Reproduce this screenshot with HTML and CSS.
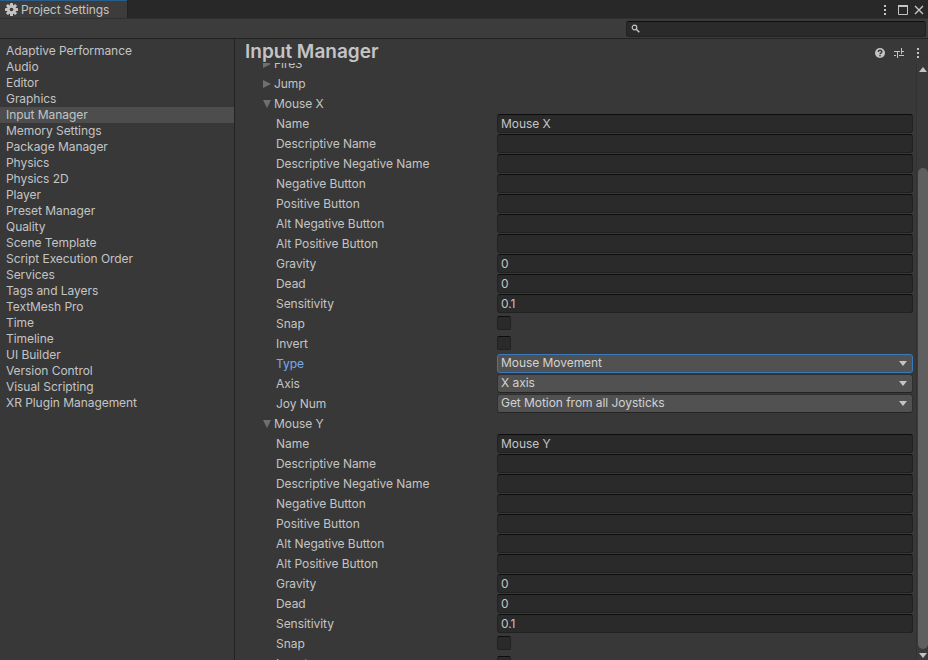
FILE: index.html
```html
<!DOCTYPE html>
<html lang="en">
<head>
<meta charset="utf-8">
<title>Project Settings</title>
<link rel="stylesheet" href="styles.css">
</head>
<body>
<div class="window">
  <div class="tabbar">
    <div class="tab">
      <svg class="gear" width="13" height="13" viewBox="0 0 13 13"><g fill="#c4c4c4"><rect x="5" y="0" width="3" height="13" rx=".5"/><rect x="5" y="0" width="3" height="13" rx=".5" transform="rotate(45 6.500 6.500)"/><rect x="5" y="0" width="3" height="13" rx=".5" transform="rotate(90 6.500 6.500)"/><rect x="5" y="0" width="3" height="13" rx=".5" transform="rotate(135 6.500 6.500)"/></g><circle cx="6.500" cy="6.500" r="3.500" fill="none" stroke="#c4c4c4" stroke-width="2.200"/><circle cx="6.500" cy="6.500" r="1.800" fill="#3c3c3c"/></svg>
      <span>Project Settings</span>
    </div>
    <div class="winctl">
      <svg class="dots" width="4" height="10" viewBox="0 0 4 10"><g fill="#c4c4c4"><rect x="1" y="0" width="2" height="2"/><rect x="1" y="4" width="2" height="2"/><rect x="1" y="8" width="2" height="2"/></g></svg>
      <svg class="maxi" width="10" height="10" viewBox="0 0 10 10"><path fill="none" stroke="#c4c4c4" d="M.5 1.500h9v8h-9z"/><path stroke="#c4c4c4" stroke-width="2" d="M0 1h10"/></svg>
      <svg width="10" height="10" viewBox="0 0 10 10"><path stroke="#c4c4c4" stroke-width="1.400" d="M1 1l8 8M9 1l-8 8"/></svg>
    </div>
  </div>
  <div class="toolbar">
    <div class="search">
      <svg width="9" height="9" viewBox="0 0 9 9"><circle cx="3.500" cy="3.500" r="2.300" fill="none" stroke="#c4c4c4" stroke-width="1.200"/><path stroke="#c4c4c4" stroke-width="1.500" d="M5.300 5.300l3 3"/></svg>
    </div>
  </div>
  <div class="main">
    <nav class="side">
      <div class="item">Adaptive Performance</div>
      <div class="item">Audio</div>
      <div class="item">Editor</div>
      <div class="item">Graphics</div>
      <div class="item selected">Input Manager</div>
      <div class="item">Memory Settings</div>
      <div class="item">Package Manager</div>
      <div class="item">Physics</div>
      <div class="item">Physics 2D</div>
      <div class="item">Player</div>
      <div class="item">Preset Manager</div>
      <div class="item">Quality</div>
      <div class="item">Scene Template</div>
      <div class="item">Script Execution Order</div>
      <div class="item">Services</div>
      <div class="item">Tags and Layers</div>
      <div class="item">TextMesh Pro</div>
      <div class="item">Time</div>
      <div class="item">Timeline</div>
      <div class="item">UI Builder</div>
      <div class="item">Version Control</div>
      <div class="item">Visual Scripting</div>
      <div class="item">XR Plugin Management</div>
    </nav>
    <section class="content">
      <header class="head">
        <h1>Input Manager</h1>
        <div class="headicons">
          <svg width="10" height="10" viewBox="0 0 10 10"><circle cx="5" cy="5" r="5" fill="#c4c4c4"/><path fill="none" stroke="#383838" stroke-width="1.400" d="M3.300 3.900c0-2.200 3.500-2.200 3.500-.1 0 1.300-1.800 1.200-1.800 2.500"/><rect x="4.300" y="7" width="1.400" height="1.400" fill="#383838"/></svg>
          <svg width="10" height="10" viewBox="0 0 10 10"><g stroke="#c4c4c4" fill="none"><path d="M0 3.500h6M8 3.500h2M7.500 0v6M0 7.500h2M5 7.500h5M3.500 4v6"/></g></svg>
          <svg width="4" height="10" viewBox="0 0 4 10"><g fill="#c4c4c4"><rect x="1" y="0" width="2" height="2"/><rect x="1" y="4" width="2" height="2"/><rect x="1" y="8" width="2" height="2"/></g></svg>
        </div>
      </header>
      <div class="body">
        <div class="scroll">
          <div class="rows">
            <div class="row group"><i class="tri right"></i>Fire3</div>
            <div class="row group"><i class="tri right"></i>Jump</div>
            <div class="row group"><i class="tri down"></i>Mouse X</div>
            <div class="row"><label>Name</label><div class="field">Mouse X</div></div>
            <div class="row"><label>Descriptive Name</label><div class="field"></div></div>
            <div class="row"><label>Descriptive Negative Name</label><div class="field"></div></div>
            <div class="row"><label>Negative Button</label><div class="field"></div></div>
            <div class="row"><label>Positive Button</label><div class="field"></div></div>
            <div class="row"><label>Alt Negative Button</label><div class="field"></div></div>
            <div class="row"><label>Alt Positive Button</label><div class="field"></div></div>
            <div class="row"><label>Gravity</label><div class="field">0</div></div>
            <div class="row"><label>Dead</label><div class="field">0</div></div>
            <div class="row"><label>Sensitivity</label><div class="field">0.1</div></div>
            <div class="row"><label>Snap</label><div class="check"></div></div>
            <div class="row"><label>Invert</label><div class="check"></div></div>
            <div class="row"><label class="focus">Type</label><div class="select focused">Mouse Movement<i class="caret"></i></div></div>
            <div class="row"><label>Axis</label><div class="select">X axis<i class="caret"></i></div></div>
            <div class="row"><label>Joy Num</label><div class="select">Get Motion from all Joysticks<i class="caret"></i></div></div>
            <div class="row group"><i class="tri down"></i>Mouse Y</div>
            <div class="row"><label>Name</label><div class="field">Mouse Y</div></div>
            <div class="row"><label>Descriptive Name</label><div class="field"></div></div>
            <div class="row"><label>Descriptive Negative Name</label><div class="field"></div></div>
            <div class="row"><label>Negative Button</label><div class="field"></div></div>
            <div class="row"><label>Positive Button</label><div class="field"></div></div>
            <div class="row"><label>Alt Negative Button</label><div class="field"></div></div>
            <div class="row"><label>Alt Positive Button</label><div class="field"></div></div>
            <div class="row"><label>Gravity</label><div class="field">0</div></div>
            <div class="row"><label>Dead</label><div class="field">0</div></div>
            <div class="row"><label>Sensitivity</label><div class="field">0.1</div></div>
            <div class="row"><label>Snap</label><div class="check"></div></div>
            <div class="row"><label>Invert</label><div class="check"></div></div>
          </div>
        </div>
        <div class="scrollbar">
          <i class="arrow up"></i>
          <div class="thumb"></div>
          <i class="arrow dn"></i>
        </div>
      </div>
    </section>
  </div>
</div>
</body>
</html>
```
FILE: styles.css
```css
* { box-sizing: border-box; }
html, body { margin: 0; padding: 0; height: 100%; overflow: hidden; }
body { background: #383838; color: #c4c4c4; font: 12px/16px Inter, "Liberation Sans", sans-serif; letter-spacing: -.05px; }
.window { width: 928px; height: 660px; display: flex; flex-direction: column; overflow: hidden; }
.tabbar { height: 18px; flex: none; background: #282828; display: flex; justify-content: space-between; }
.tab { width: 127px; height: 18px; background: #3c3c3c; border-top: 1px solid #2c5d87; display: flex; align-items: center; padding-left: 5px; gap: 3px; box-shadow: 1px 0 0 #232323; }
.gear { flex: none; }
.winctl { display: flex; align-items: center; gap: 6px; padding: 1px 4px 0 0; }
.dots { margin-right: 5px; }
.toolbar { height: 21px; flex: none; background: #3c3c3c; border-top: 1px solid #303030; border-bottom: 1px solid #232323; display: flex; justify-content: flex-end; align-items: center; padding-right: 2px; }
.search { width: 300px; height: 16px; background: #2a2a2a; border: 1px solid #212121; border-top-color: #0d0d0d; border-radius: 3px; display: flex; align-items: center; padding-left: 4px; }
.main { flex: 1; min-height: 0; display: flex; }
.side { width: 235px; flex: none; border-right: 1px solid #232323; padding-top: 4px; }
.item { height: 16px; padding-left: 6px; line-height: 16px; white-space: nowrap; }
.item.selected { background: #4d4d4d; }
.content { flex: 1; min-width: 0; display: flex; flex-direction: column; }
.head { height: 24px; flex: none; display: flex; justify-content: space-between; align-items: flex-start; padding: 2px 8px 0 10px; }
.head h1 { margin: 0; font-size: 19px; line-height: 22px; font-weight: 600; color: #c4c4c4; letter-spacing: 0; }
.headicons { display: flex; align-items: center; gap: 9px; padding-top: 7px; }
.headicons svg:nth-child(2) { margin-right: 3px; }
.body { flex: 1; min-height: 0; display: flex; }
.scroll { flex: 1; min-width: 0; overflow: hidden; }
.rows { margin-top: -9px; padding: 0 3px 0 15px; }
.row { height: 20px; display: flex; align-items: center; }
.row label { width: 247px; padding-left: 26px; flex: none; white-space: nowrap; }
.row label.focus { color: #7babed; }
.group { padding-left: 13px; white-space: nowrap; }
.tri { width: 0; height: 0; flex: none; }
.tri.right { border-left: 8px solid #6f6f6f; border-top: 4.500px solid transparent; border-bottom: 4.500px solid transparent; margin-right: 3px; }
.tri.down { border-top: 8px solid #6f6f6f; border-left: 4.500px solid transparent; border-right: 4.500px solid transparent; margin-right: 3px; }
.field { flex: 1; height: 19px; margin-bottom: 1px; background: #2a2a2a; border: 1px solid #212121; border-top-color: #0d0d0d; border-radius: 3px; padding: 1px 0 0 3px; line-height: 16px; }
.check { width: 14px; height: 14px; margin-bottom: 2px; background: #2a2a2a; border: 1px solid #212121; border-top-color: #0d0d0d; border-radius: 2px; }
.select { flex: 1; height: 19px; margin-bottom: 1px; background: #515151; border: 1px solid #303030; border-bottom-color: #242424; border-radius: 3px; padding-left: 3px; line-height: 16px; position: relative; color: #d2d2d2; }
.select.focused { border-color: #3a79bb; }
.caret { position: absolute; right: 5px; top: 6px; width: 0; height: 0; border-top: 5px solid #c4c4c4; border-left: 4px solid transparent; border-right: 4px solid transparent; }
.scrollbar { width: 12px; flex: none; display: flex; flex-direction: column; align-items: center; background: #3a3a3a; border-left: 1px solid #323232; padding-top: 4px; }
.arrow { width: 0; height: 0; flex: none; border-left: 4px solid transparent; border-right: 4px solid transparent; }
.arrow.up { border-bottom: 5px solid #c4c4c4; }
.arrow.dn { border-top: 5px solid #c4c4c4; margin-bottom: 2px; }
.thumb { width: 10px; flex: 1; margin: 96px 0 4px; background: #5f5f5f; border-radius: 5px; }
```
